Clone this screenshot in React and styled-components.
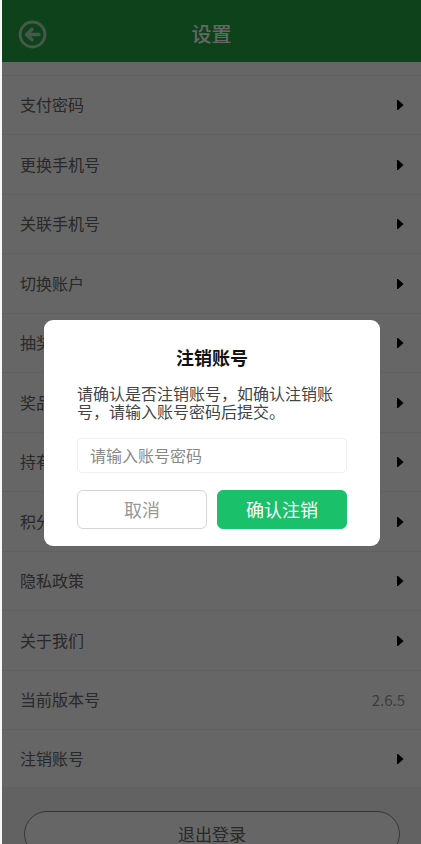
import React from 'react';
import styled, { createGlobalStyle } from 'styled-components'

const GlobalStyle = createGlobalStyle`
  * {
    box-sizing:border-box;
  }
  body {
    margin:0;
    background:#f7f8f7;
    font-family:"Noto Sans CJK SC", sans-serif;
  }
  button, input {
    font-family:inherit;
  }
`
const Screen = styled.div`
  position:relative;
  height:100vh;
  margin-left:2px;
  overflow:hidden;
  background:#f5f5f5;
`
const Header = styled.header`
  display:grid;
  grid-template-columns:48px 1fr 48px;
  align-items:center;
  height:62px;
  padding-top:6px;
  background:#21a544;
`
const BackButton = styled.button`
  display:flex;
  margin-left:16px;
  padding:0;
  border:none;
  background:none;
  cursor:pointer;
`
const PageTitle = styled.h1`
  margin:0;
  color:#fff;
  font-size:20px;
  font-weight:500;
  line-height:24px;
  text-align:center;
`
const List = styled.ul`
  margin:0;
  padding:13px 0 0;
  list-style:none;
  background:#fff;
`
const Row = styled.li`
  height:59px;
  border-top:1px solid #f0f0f0;

  &:nth-child(even) {
    height:60px;
  }
  &:last-child {
    height:58px;
  }
`
const RowContent = styled.div`
  display:flex;
  align-items:center;
  justify-content:space-between;
  height:100%;
  padding:0 16px 0 18px;
  color:#666;
  font-size:16px;
  text-decoration:none;
`
const RowLabel = styled.span`
  padding-bottom:2px;
`
const Version = styled.span`
  padding-bottom:2px;
  color:#999;
  font-size:15px;
`
const LogoutButton = styled.button`
  display:block;
  width:calc(100% - 43px);
  height:46px;
  margin:24px 21px 0 22px;
  padding:0 0 2px;
  border:1px solid #888;
  border-radius:23px;
  background:#fff;
  color:#666;
  font-size:17px;
  cursor:pointer;
`
const Overlay = styled.div`
  position:absolute;
  inset:0;
  display:flex;
  align-items:center;
  justify-content:center;
  padding:22px 41px 0 42px;
  background:rgba(0, 0, 0, .6);
`
const Dialog = styled.form`
  width:100%;
  max-width:400px;
  padding:26px 33px 17px;
  border-radius:9px;
  background:#fff;
`
const DialogTitle = styled.h2`
  margin:0;
  color:#111;
  font-size:18px;
  font-weight:700;
  line-height:22px;
  text-align:center;
`
const Message = styled.label`
  display:block;
  margin-top:16px;
  color:#444;
  font-size:16px;
  line-height:18px;
`
const PasswordInput = styled.input`
  display:block;
  width:100%;
  height:35px;
  margin-top:18px;
  padding:0 12px 2px;
  border:1px solid #eee;
  border-radius:5px;
  outline:none;
  background:#fff;
  font-size:16px;

  &::placeholder {
    color:#888;
  }
`
const Actions = styled.div`
  display:grid;
  grid-template-columns:1fr 1fr;
  gap:10px;
  margin-top:17px;
`
const Button = styled.button`
  height:39px;
  padding:0 0 2px;
  border:1px solid ${props => props.$primary ? '#1bc06b' : '#d5d5d5'};
  border-radius:6px;
  background:${props => props.$primary ? '#1bc06b' : '#fff'};
  color:${props => props.$primary ? '#fff' : '#999'};
  font-size:18px;
  cursor:pointer;
`

const rows = [
  { title: '支付密码' },
  { title: '更换手机号' },
  { title: '关联手机号' },
  { title: '切换账户' },
  { title: '抽奖记录' },
  { title: '奖品记录' },
  { title: '持有记录' },
  { title: '积分记录' },
  { title: '隐私政策' },
  { title: '关于我们' },
  { title: '当前版本号', value: '2.6.5' },
  { title: '注销账号' }
]

const BackIcon = () => (
  <svg width="29" height="29" viewBox="0 0 29 29" fill="none" stroke="#acdcb6" aria-hidden="true">
    <circle cx="14.5" cy="14.5" r="12.4" strokeWidth="3" />
    <path d="M14 9.2 8.6 14.5l5.4 5.3M9.5 14.5h11.5" strokeWidth="3.4" strokeLinecap="round" strokeLinejoin="round" />
  </svg>
)

const ArrowIcon = () => (
  <svg width="8" height="10" viewBox="0 0 8 10" aria-hidden="true">
    <path d="M0 0H1L6.6 5 1 10H0Z" fill="#000" />
  </svg>
)

const SettingRow = ({ title, value }) => (
  <Row>
    {value
      ? <RowContent><RowLabel>{title}</RowLabel><Version>{value}</Version></RowContent>
      : <RowContent as="a" href="#"><RowLabel>{title}</RowLabel><ArrowIcon /></RowContent>}
  </Row>
)

class App extends React.PureComponent {
  state = {
    password: ""
  }
  onPasswordChange = (e) => {
    this.setState({ password: e.target.value })
  }
  onSubmit = (e) => {
    e.preventDefault();
  }
  render() {
    return (
      <>
        <GlobalStyle />
        <Screen>
          <Header>
            <BackButton type="button" aria-label="返回"><BackIcon /></BackButton>
            <PageTitle>设置</PageTitle>
          </Header>
          <List>
            {rows.map(row => <SettingRow key={row.title} {...row} />)}
          </List>
          <LogoutButton type="button">退出登录</LogoutButton>
          <Overlay>
            <Dialog onSubmit={this.onSubmit}>
              <DialogTitle>注销账号</DialogTitle>
              <Message htmlFor="password">请确认是否注销账号，如确认注销账号，请输入账号密码后提交。</Message>
              <PasswordInput id="password" type="password" autoComplete="off" placeholder="请输入账号密码" value={this.state.password} onChange={this.onPasswordChange} />
              <Actions>
                <Button type="button">取消</Button>
                <Button type="submit" $primary>确认注销</Button>
              </Actions>
            </Dialog>
          </Overlay>
        </Screen>
      </>
    )
  }
}

export default App
